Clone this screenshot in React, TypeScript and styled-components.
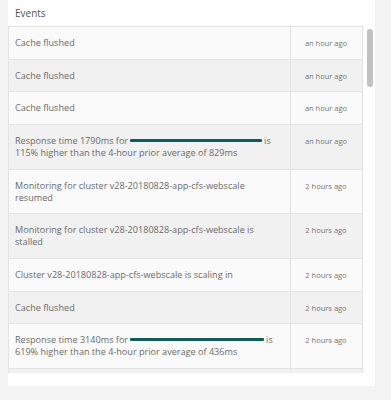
import React from "react";
import styled, { createGlobalStyle } from "styled-components";

const GlobalStyle = createGlobalStyle`
  html, body {
    margin: 0;
    padding: 0;
    background: #f3f3f3;
  }
  body {
    font-family: "Open Sans", "Liberation Sans", sans-serif;
  }
`;

const Page = styled.div`
  width: 391px;
  height: 400px;
  padding: 0 16px 0 8px;
  box-sizing: border-box;
  overflow: hidden;
`;

const Panel = styled.div`
  background: #ffffff;
  padding-bottom: 13px;
`;

const Title = styled.div`
  height: 26px;
  display: flex;
  align-items: center;
  padding-left: 7px;
  font-size: 10px;
  color: #555;
`;

const Body = styled.div`
  display: flex;
  height: 347px;
  overflow: hidden;
`;

const Table = styled.div`
  width: 355px;
  border: 1px solid #e3e3e3;
  border-bottom: none;
  box-sizing: border-box;
`;

const Row = styled.div<{ $shaded: boolean }>`
  display: flex;
  min-height: 32.67px;
  box-sizing: border-box;
  background: ${(p) => (p.$shaded ? "#f1f1f1" : "#fafafa")};
  border-bottom: 1px solid #e3e3e3;
`;

const Message = styled.div`
  width: 282px;
  box-sizing: border-box;
  padding: 10px 12px 9.67px 6px;
  font-size: 9.1px;
  line-height: 12px;
  color: #6b6b6b;
  border-right: 1px solid #e3e3e3;
`;

const Line = styled.span`
  display: block;
  white-space: nowrap;
`;

const Time = styled.div`
  flex: 1;
  padding-top: 10px;
  padding-right: 1px;
  text-align: center;
  font-size: 7.5px;
  line-height: 12px;
  color: #777;
`;

const Redacted = styled.span<{ $w: number }>`
  display: inline-block;
  width: ${(p) => p.$w}px;
  height: 3px;
  margin: 0 2px;
  vertical-align: 2px;
  background: #0f5c5c;
  border-radius: 1px;
`;

const Track = styled.div`
  width: 12px;
  padding: 3px 2px 0 4px;
  box-sizing: border-box;
`;

const Thumb = styled.div`
  height: 58px;
  border-radius: 3px;
  background: #c2c2c2;
`;

type EventItem = { text: React.ReactNode; time: string };

const responseAlert = (ms: number, pct: number, avg: number, bar: number) => (
  <>
    <Line>
      Response time {ms}ms for<Redacted $w={bar} />is
    </Line>
    <Line>
      {pct}% higher than the 4-hour prior average of {avg}ms
    </Line>
  </>
);

const events: EventItem[] = [
  { text: "Cache flushed", time: "an hour ago" },
  { text: "Cache flushed", time: "an hour ago" },
  { text: "Cache flushed", time: "an hour ago" },
  { text: responseAlert(1790, 115, 829, 132), time: "an hour ago" },
  {
    text: "Monitoring for cluster v28-20180828-app-cfs-webscale resumed",
    time: "2 hours ago",
  },
  {
    text: "Monitoring for cluster v28-20180828-app-cfs-webscale is stalled",
    time: "2 hours ago",
  },
  { text: "Cluster v28-20180828-app-cfs-webscale is scaling in", time: "2 hours ago" },
  { text: "Cache flushed", time: "2 hours ago" },
  { text: responseAlert(3140, 619, 436, 134), time: "2 hours ago" },
  { text: "", time: "" },
];

const App = () => {
  return (
    <>
      <GlobalStyle />
      <Page>
        <Panel>
          <Title>Events</Title>
          <Body>
            <Table>
              {events.map((e, i) => (
                <Row key={i} $shaded={i % 2 === 1}>
                  <Message>{e.text}</Message>
                  <Time>{e.time}</Time>
                </Row>
              ))}
            </Table>
            <Track>
              <Thumb />
            </Track>
          </Body>
        </Panel>
      </Page>
    </>
  );
};

export default App;
